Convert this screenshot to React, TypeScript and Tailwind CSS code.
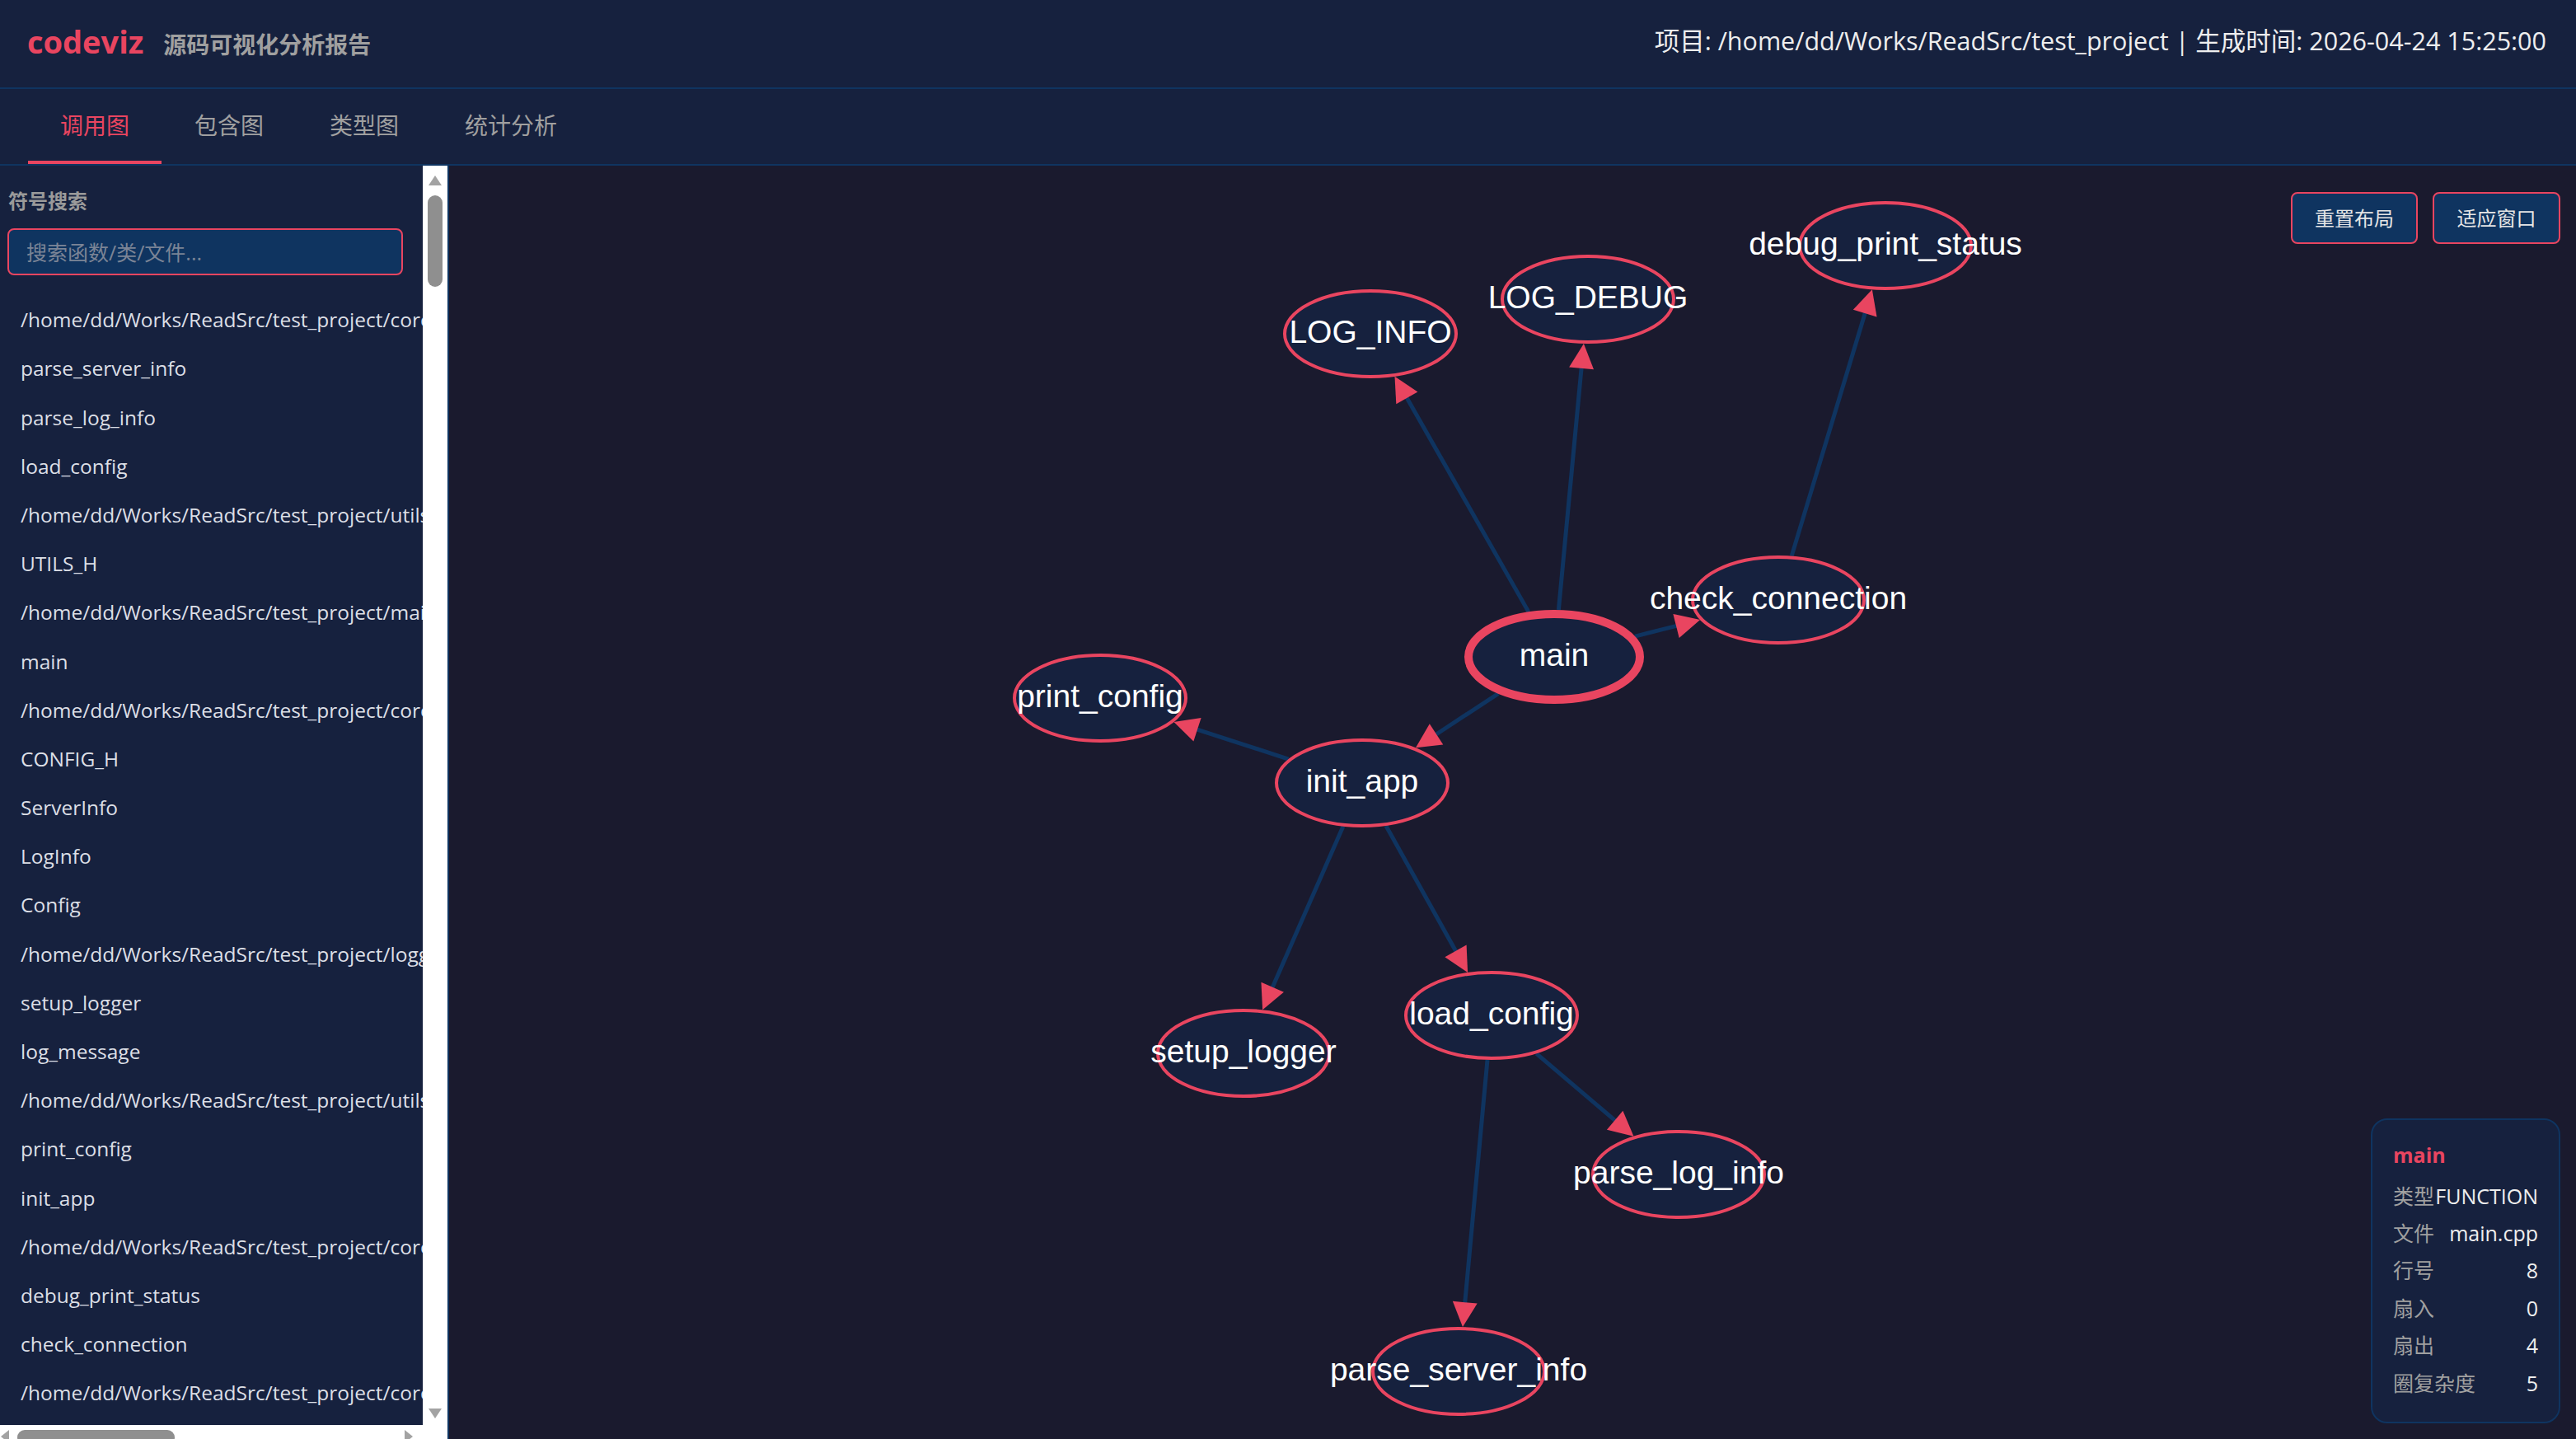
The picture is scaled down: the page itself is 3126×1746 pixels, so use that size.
import React from "react";

type N = { id: string; x: number; y: number; main?: boolean };

const nodes: N[] = [
  { id: "debug_print_status", x: 2292, y: 299 },
  { id: "LOG_DEBUG", x: 1931, y: 364 },
  { id: "LOG_INFO", x: 1667, y: 406 },
  { id: "check_connection", x: 2162, y: 729 },
  { id: "main", x: 1890, y: 798, main: true },
  { id: "print_config", x: 1339, y: 848 },
  { id: "init_app", x: 1657, y: 951 },
  { id: "setup_logger", x: 1513, y: 1279 },
  { id: "load_config", x: 1814, y: 1233 },
  { id: "parse_log_info", x: 2041, y: 1426 },
  { id: "parse_server_info", x: 1774, y: 1665 },
];

const edges: [string, string][] = [
  ["main", "LOG_INFO"],
  ["main", "LOG_DEBUG"],
  ["main", "check_connection"],
  ["main", "init_app"],
  ["check_connection", "debug_print_status"],
  ["init_app", "print_config"],
  ["init_app", "setup_logger"],
  ["init_app", "load_config"],
  ["load_config", "parse_log_info"],
  ["load_config", "parse_server_info"],
];

const RX = 104;
const RY = 52;

function sw(n: N) {
  return n.main ? 10 : 4;
}

function boundary(n: N, dx: number, dy: number) {
  const rx = RX + sw(n) / 2;
  const ry = RY + sw(n) / 2;
  const t = 1 / Math.sqrt((dx / rx) ** 2 + (dy / ry) ** 2);
  return { x: n.x + dx * t, y: n.y + dy * t };
}

function Graph() {
  const map: Record<string, N> = {};
  nodes.forEach((n) => (map[n.id] = n));
  return (
    <svg className="absolute inset-0 w-full h-full">
      <g transform="translate(-549 -202)">
        {edges.map(([s, t]) => {
          const a = map[s];
          const b = map[t];
          const dx = b.x - a.x;
          const dy = b.y - a.y;
          const len = Math.sqrt(dx * dx + dy * dy);
          const ux = dx / len;
          const uy = dy / len;
          const start = boundary(a, dx, dy);
          const tip = boundary(b, -dx, -dy);
          const L = 30;
          const H = 15;
          const bx = tip.x - ux * L;
          const by = tip.y - uy * L;
          const p1 = `${bx + -uy * H},${by + ux * H}`;
          const p2 = `${bx - -uy * H},${by - ux * H}`;
          return (
            <g key={s + t}>
              <line
                x1={start.x}
                y1={start.y}
                x2={bx + ux * 2}
                y2={by + uy * 2}
                stroke="#0f3460"
                strokeWidth={5}
              />
              <polygon points={`${tip.x},${tip.y} ${p1} ${p2}`} fill="#e94560" />
            </g>
          );
        })}
        {nodes.map((n) => (
          <ellipse
            key={n.id}
            cx={n.x}
            cy={n.y}
            rx={RX}
            ry={RY}
            fill="#16213e"
            stroke="#e94560"
            strokeWidth={sw(n)}
          />
        ))}
        {nodes.map((n) => (
          <text
            key={n.id + "-l"}
            x={n.x}
            y={n.y}
            dy="0.28em"
            textAnchor="middle"
            fill="#ffffff"
            fontSize={39}
            fontFamily="'Liberation Sans', Arial, sans-serif"
          >
            {n.id}
          </text>
        ))}
      </g>
    </svg>
  );
}

const items = [
  "/home/dd/Works/ReadSrc/test_project/core/config.cpp",
  "parse_server_info",
  "parse_log_info",
  "load_config",
  "/home/dd/Works/ReadSrc/test_project/utils/utils.h",
  "UTILS_H",
  "/home/dd/Works/ReadSrc/test_project/main.cpp",
  "main",
  "/home/dd/Works/ReadSrc/test_project/core/config.h",
  "CONFIG_H",
  "ServerInfo",
  "LogInfo",
  "Config",
  "/home/dd/Works/ReadSrc/test_project/logger/logger.cpp",
  "setup_logger",
  "log_message",
  "/home/dd/Works/ReadSrc/test_project/utils/utils.cpp",
  "print_config",
  "init_app",
  "/home/dd/Works/ReadSrc/test_project/core/app.cpp",
  "debug_print_status",
  "check_connection",
  "/home/dd/Works/ReadSrc/test_project/core/network.cpp",
  "/home/dd/Works/ReadSrc/test_project/logger/logger.h",
];

const tabs = ["调用图", "包含图", "类型图", "统计分析"];

const info: [string, string][] = [
  ["类型", "FUNCTION"],
  ["文件", "main.cpp"],
  ["行号", "8"],
  ["扇入", "0"],
  ["扇出", "4"],
  ["圈复杂度", "5"],
];

export default function App() {
  return (
    <div className="h-screen w-full flex flex-col overflow-hidden bg-[#1a1a2e] [font-family:'Open_Sans','Noto_Sans_CJK_SC',sans-serif]">
      <header className="h-[108px] shrink-0 flex items-center justify-between pl-[33px] pr-[36px] pb-[7px] bg-[#16213e] border-b-2 border-[#0f3460]">
        <div className="flex items-baseline gap-[24px]">
          <span className="text-[38px] font-bold text-[#e94560] leading-none">codeviz</span>
          <span className="text-[28px] font-bold text-[#a0a0a0] leading-none">源码可视化分析报告</span>
        </div>
        <div className="text-[30.5px] text-[#eeeeee] whitespace-nowrap">
          项目: /home/dd/Works/ReadSrc/test_project | 生成时间: 2026-04-24 15:25:00
        </div>
      </header>

      <nav className="h-[93px] shrink-0 flex items-stretch pl-[34px] bg-[#16213e] border-b-2 border-[#0f3460]">
        {tabs.map((t, i) => (
          <div
            key={t}
            className={
              i === 0
                ? "px-[39px] flex items-center text-[28px] border-b-4 border-[#e94560] text-[#e94560]"
                : "px-[40px] flex items-center text-[28px] border-b-4 border-transparent text-[#a0a0a0]"
            }
          >
            {t}
          </div>
        ))}
      </nav>

      <div className="flex-1 min-h-0 flex">
        <aside className="w-[545px] shrink-0 flex flex-col bg-[#16213e] border-r-2 border-[#0f3460]">
          <div className="flex-1 min-h-0 flex">
            <div className="flex-1 min-w-0 overflow-hidden pl-[9px] pt-[26px]">
              <div className="pl-px text-[24px] font-bold text-[#9a9a9a] leading-[34px]">符号搜索</div>
              <input
                className="mt-[16px] w-[480px] h-[57px] rounded-[8px] border-2 border-[#e94560] bg-[#0f3460] pl-[21px] text-[25px] text-[#e0e0e0] placeholder:text-[#7b8496] outline-none"
                placeholder="搜索函数/类/文件..."
              />
              <ul className="mt-[25px]">
                {items.map((it, i) => (
                  <li
                    key={i}
                    className="h-[59.2px] flex items-center pl-[16px] whitespace-nowrap text-[24.5px] text-[#dcdfe6]"
                  >
                    {it}
                  </li>
                ))}
              </ul>
            </div>
            <div className="w-[30px] shrink-0 bg-white flex flex-col items-center pt-[12px] pb-[8px]">
              <svg width="16" height="12" viewBox="0 0 16 12">
                <polygon points="8,0 16,12 0,12" fill="#a3a3a3" />
              </svg>
              <div className="mt-[12px] w-[18px] h-[111px] rounded-full bg-[#8f8f8f]" />
              <div className="flex-1" />
              <svg width="16" height="12" viewBox="0 0 16 12">
                <polygon points="0,0 16,0 8,12" fill="#a3a3a3" />
              </svg>
            </div>
          </div>
          <div className="h-[17px] shrink-0 bg-white flex items-start overflow-hidden">
            <svg className="mt-[6px] ml-[1px]" width="10" height="16" viewBox="0 0 10 16">
              <polygon points="0,8 10,0 10,16" fill="#a3a3a3" />
            </svg>
            <div className="mt-[6px] ml-[10px] w-[191px] h-[18px] rounded-full bg-[#8f8f8f]" />
            <div className="flex-1" />
            <svg className="mt-[6px] mr-[42px]" width="10" height="16" viewBox="0 0 10 16">
              <polygon points="0,0 10,8 0,16" fill="#a3a3a3" />
            </svg>
          </div>
        </aside>

        <main className="flex-1 relative bg-[#1a1a2e] overflow-hidden">
          <Graph />
          <div className="absolute top-[32px] right-[19px] flex gap-[18px]">
            <button className="w-[154px] h-[63px] rounded-[8px] border-2 border-[#e94560] bg-[#0f3460] text-[24px] text-[#e6e6e6]">
              重置布局
            </button>
            <button className="w-[155px] h-[63px] rounded-[8px] border-2 border-[#e94560] bg-[#0f3460] text-[24px] text-[#e6e6e6]">
              适应窗口
            </button>
          </div>
          <div className="absolute right-[19px] bottom-[19px] w-[230px] rounded-[20px] border-2 border-[#0f3460] bg-[#16213e] px-[25px] pt-[24px] pb-[24px]">
            <div className="h-[36px] leading-[36px] text-[25px] font-bold text-[#e94560] mb-[10px]">main</div>
            {info.map(([k, v]) => (
              <div key={k} className="h-[45.4px] flex items-center justify-between text-[25px]">
                <span className="text-[#a0a0a0]">{k}</span>
                <span className="text-[#eeeeee]">{v}</span>
              </div>
            ))}
          </div>
        </main>
      </div>
    </div>
  );
}
